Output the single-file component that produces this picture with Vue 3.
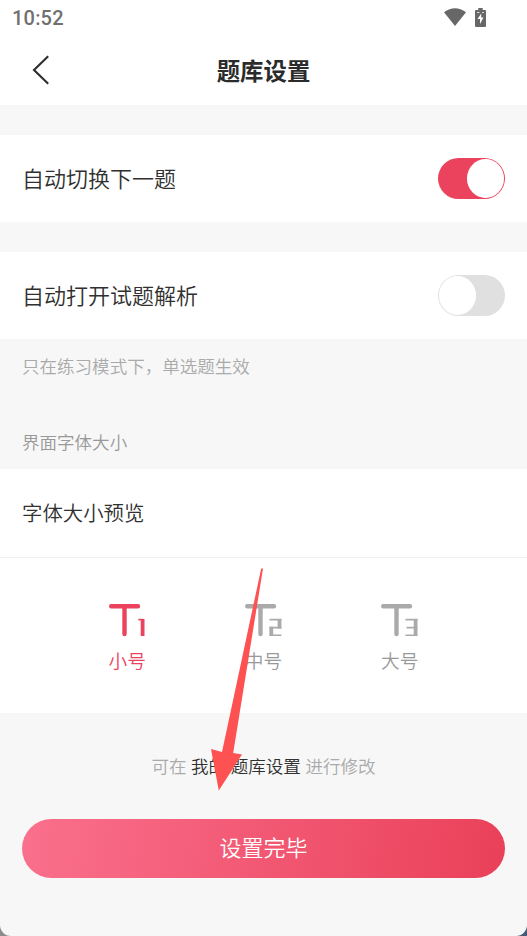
<script setup>
import { ref } from 'vue'

const autoNext = ref(true)
const autoExplain = ref(false)
const selected = ref(0)
const sizes = [
  { label: '小号', thick: 'M33.6 15V32', thin: 'M29.3 15.6H34' },
  { label: '中号', thick: 'M34.5 15V24.4M26.3 22.8V32', thin: 'M24.5 15.6H36.4M24.5 23.6H36.4M24.5 31.3H36.4' },
  { label: '大号', thick: 'M34.6 15V32', thin: 'M24.5 15.6H36.4M25.5 23.6H36.4M24.5 31.3H36.4' },
]
</script>

<template>
  <div class="device">
    <main class="screen">
      <div class="status">
        <span class="time">10:52</span>
        <span class="indicators">
          <svg width="22" height="18" viewBox="0 0 22 18"><path d="M0 4.2Q11-3.8 22 4.2L11 18Z" fill="#676767" /></svg>
          <svg width="11" height="19" viewBox="0 0 11 19">
            <path d="M3.3 0H7.7V2H10Q11 2 11 3V18Q11 19 10 19H1Q0 19 0 18V3Q0 2 1 2H3.3Z" fill="#676767" />
            <path d="M6.2 5.5L2.5 11H5V16L8.5 9.6H6.2ZM2 4.3H4.5V5H2ZM7 4.3H9V5H7Z" fill="#fff" />
          </svg>
        </span>
      </div>
      <header class="header">
        <svg class="back" width="18" height="30" viewBox="0 0 18 30"><path d="M16.2 1.2L2 15L16.2 28.8" fill="none" stroke="#2d2d2d" stroke-width="2.1" /></svg>
        <h1>题库设置</h1>
      </header>

      <section class="row">
        <span>自动切换下一题</span>
        <button class="switch" :class="{ on: autoNext }" @click="autoNext = !autoNext"><i></i></button>
      </section>
      <section class="row second">
        <span>自动打开试题解析</span>
        <button class="switch" :class="{ on: autoExplain }" @click="autoExplain = !autoExplain"><i></i></button>
      </section>

      <p class="hint">只在练习模式下，单选题生效</p>
      <p class="caption">界面字体大小</p>

      <section class="preview">字体大小预览</section>
      <section class="sizes">
        <div v-for="(s, i) in sizes" :key="s.label" class="size" :class="{ active: i === selected }" @click="selected = i">
          <svg width="37" height="33" viewBox="0 0 37 33" fill="none" stroke="currentColor">
            <path d="M2.2 2.2H29M15.5 2.2V30" stroke-width="4.4" stroke-linecap="round" />
            <path :d="s.thick" stroke-width="3.8" />
            <path :d="s.thin" stroke-width="1.6" />
          </svg>
          <span>{{ s.label }}</span>
        </div>
      </section>

      <p class="note">可在 <b>我的 题库设置</b> 进行修改</p>
      <button class="done">设置完毕</button>
    </main>
    <svg class="pointer" width="34" height="224" viewBox="0 0 34 224">
      <path d="M51.2 .5H53L23.2 185L32 186.5L8.8 222.5L1 181L12 184Z" fill="#fd5152" />
    </svg>
  </div>
</template>

<style>
body { margin: 0; }
</style>

<style scoped>
* { box-sizing: border-box; }
.device {
  position: relative;
  width: 527px;
  height: 936px;
  overflow: hidden;
  background: linear-gradient(90deg, #8b8d8b 50%, #455a76 50%);
  font-family: "Noto Sans CJK SC", sans-serif;
  font-weight: 350;
  color: #303030;
}
.screen {
  display: flex;
  flex-direction: column;
  height: 936px;
  overflow: hidden;
  background: #f7f7f7;
  border-radius: 0 0 11px 11px;
}
.status {
  display: flex;
  justify-content: space-between;
  align-items: center;
  height: 36px;
  padding: 0 41px 2px 12px;
  background: #fff;
  flex: none;
}
.time {
  font: 500 20px/24px Roboto, sans-serif;
  color: #707070;
  letter-spacing: .2px;
  padding-top: 2px;
}
.indicators { display: flex; gap: 9px; align-items: center; }
.header {
  display: grid;
  grid-template-columns: 60px 1fr 60px;
  align-items: center;
  height: 69px;
  padding-bottom: 2px;
  background: #fff;
  flex: none;
}
.back { margin-left: 32px; }
h1 {
  margin: 0;
  font-size: 23.4px;
  line-height: 34px;
  font-weight: 700;
  text-align: center;
  color: #2b2b2b;
}
.row {
  display: flex;
  align-items: center;
  justify-content: space-between;
  flex: none;
  height: 87px;
  margin-top: 30px;
  padding: 0 22px;
  background: #fff;
  font-size: 22px;
}
.row span { padding-bottom: 4px; }
.second { height: 87.5px; margin-top: 29.5px; }
.second span { padding-bottom: 3px; }
.switch {
  display: flex;
  align-items: center;
  width: 67px;
  height: 41px;
  padding: 0 1.5px 0 1px;
  border: 0;
  border-radius: 21px;
  background: #e0e0e0;
}
.switch i { width: 37px; height: 38.5px; border-radius: 50%; background: #fff; }
.switch.on { justify-content: flex-end; background: #eb435d; }
p { margin: 0; }
.hint {
  height: 76px;
  padding: 14px 22px 0;
  font-size: 17.55px;
  line-height: 26px;
  color: #aaa;
  flex: none;
}
.caption {
  height: 54px;
  padding: 14px 22px 0;
  font-size: 17.55px;
  line-height: 26px;
  color: #999;
  flex: none;
}
.preview {
  display: flex;
  align-items: center;
  flex: none;
  height: 89px;
  padding: 0 22px 2px;
  border-bottom: 1px solid #f0f0f0;
  background: #fff;
  font-size: 20.4px;
}
.sizes {
  display: grid;
  grid-template-columns: repeat(3, 136.3px);
  justify-content: center;
  flex: none;
  height: 155px;
  padding-top: 46px;
  background: #fff;
}
.size {
  display: flex;
  flex-direction: column;
  align-items: center;
  gap: 9px;
  color: #aaa;
}
.size span { font-size: 18.7px; line-height: 28px; color: #999; }
.size.active, .size.active span { color: #eb435d; }
.note {
  margin-top: 40px;
  font-size: 17.55px;
  line-height: 26px;
  text-align: center;
  word-spacing: .7px;
  color: #aaa;
}
.note b { font-weight: inherit; color: #303030; }
.done {
  height: 58.5px;
  margin: 40px 22px 0;
  padding: 0 0 4px;
  border: 0;
  border-radius: 30px;
  background: linear-gradient(100deg, #fa708d, #ea4059);
  color: #fff;
  font-family: inherit;
  font-weight: inherit;
  font-size: 22px;
}
.pointer { position: absolute; left: 210px; top: 567.5px; overflow: visible; }
</style>
